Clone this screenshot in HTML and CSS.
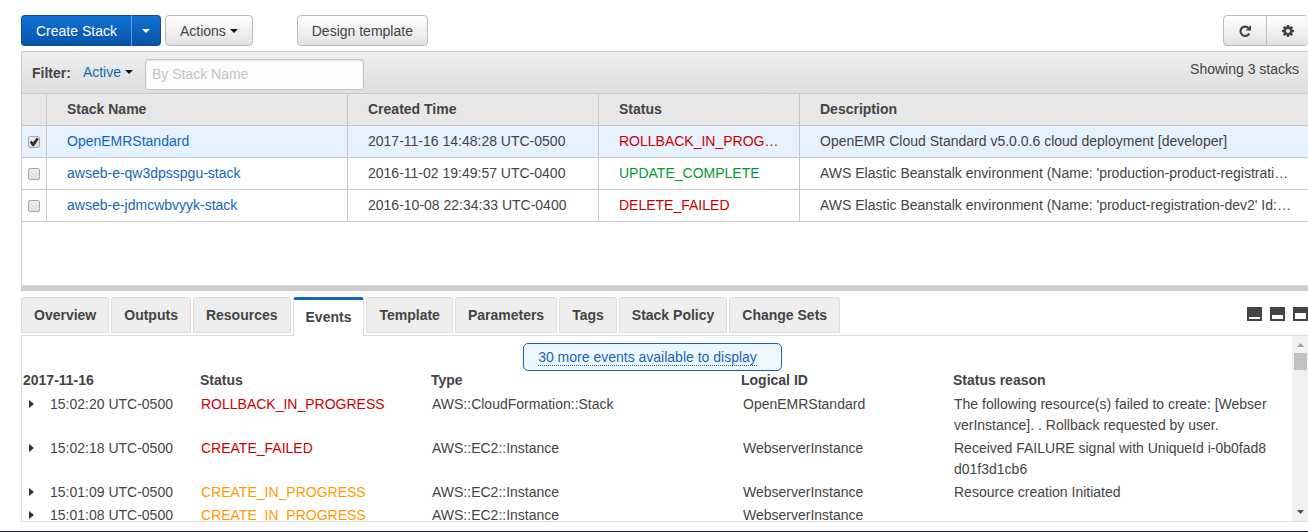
FILE: index.html
```html
<!DOCTYPE html>
<html lang="en">
<head>
<meta charset="utf-8">
<title>CloudFormation Stacks</title>
<link rel="stylesheet" href="styles.css">
</head>
<body>
<div class="page">
  <header class="toolbar">
    <div class="split">
      <button class="btn primary split-main" type="button">Create Stack</button>
      <button class="btn primary split-toggle" type="button" aria-label="More create options"><svg class="caret" viewBox="0 0 8 4" aria-hidden="true"><path d="M0 0h8L4 4z"/></svg></button>
    </div>
    <button class="btn actions" type="button">Actions <svg class="caret dark" viewBox="0 0 8 4" aria-hidden="true"><path d="M0 0h8L4 4z"/></svg></button>
    <button class="btn design" type="button">Design template</button>
    <div class="tools">
      <button class="btn tool" type="button" aria-label="Refresh">
        <svg class="tool-icon" viewBox="0 0 12 12" aria-hidden="true"><path d="M9.500 2.900A4.700 4.700 0 1 0 10.300 8.600" fill="none" stroke="#444" stroke-width="2.200"/><path d="M12 0v5.400H6.600z" fill="#444"/></svg>
      </button>
      <button class="btn tool last" type="button" aria-label="Settings">
        <svg class="tool-icon" viewBox="0 0 12 12" aria-hidden="true">
          <g fill="#444"><path d="M4.800 0h2.400v12H4.800z"/><path d="M0 4.800h12v2.400H0z"/><path d="M4.800 0h2.400v12H4.800z" transform="rotate(45 6 6)"/><path d="M4.800 0h2.400v12H4.800z" transform="rotate(-45 6 6)"/><circle cx="6" cy="6" r="4.700"/></g>
          <circle cx="6" cy="6" r="2" fill="#f1f1f1"/>
        </svg>
      </button>
    </div>
  </header>

  <section class="stacks">
    <div class="filter">
      <span class="filter-label">Filter:</span>
      <button class="filter-menu" type="button">Active <svg class="caret dark" viewBox="0 0 8 4" aria-hidden="true"><path d="M0 0h8L4 4z"/></svg></button>
      <input class="search" type="text" placeholder="By Stack Name" aria-label="By Stack Name">
      <span class="count">Showing 3 stacks</span>
    </div>
    <table class="stack-table">
      <colgroup><col class="c-check"><col class="c-name"><col class="c-created"><col class="c-status"><col></colgroup>
      <thead>
        <tr><th></th><th>Stack Name</th><th>Created Time</th><th>Status</th><th>Description</th></tr>
      </thead>
      <tbody>
        <tr class="selected">
          <td class="pick"><input class="check" type="checkbox" checked aria-label="Select OpenEMRStandard"></td>
          <td><a class="link" href="#">OpenEMRStandard</a></td>
          <td>2017-11-16 14:48:28 UTC-0500</td>
          <td class="bad">ROLLBACK_IN_PROGRESS</td>
          <td>OpenEMR Cloud Standard v5.0.0.6 cloud deployment [developer]</td>
        </tr>
        <tr>
          <td class="pick"><input class="check" type="checkbox" aria-label="Select awseb-e-qw3dpsspgu-stack"></td>
          <td><a class="link" href="#">awseb-e-qw3dpsspgu-stack</a></td>
          <td>2016-11-02 19:49:57 UTC-0400</td>
          <td class="good">UPDATE_COMPLETE</td>
          <td>AWS Elastic Beanstalk environment (Name: 'production-product-registration')</td>
        </tr>
        <tr>
          <td class="pick"><input class="check" type="checkbox" aria-label="Select awseb-e-jdmcwbvyyk-stack"></td>
          <td><a class="link" href="#">awseb-e-jdmcwbvyyk-stack</a></td>
          <td>2016-10-08 22:34:33 UTC-0400</td>
          <td class="bad">DELETE_FAILED</td>
          <td>AWS Elastic Beanstalk environment (Name: 'product-registration-dev2' Id:&nbsp;'e-jdmcwbvyyk')</td>
        </tr>
      </tbody>
    </table>
  </section>
  <div class="splitter"></div>

  <nav class="tabs">
    <button class="tab" type="button">Overview</button>
    <button class="tab" type="button">Outputs</button>
    <button class="tab" type="button">Resources</button>
    <button class="tab active" type="button">Events</button>
    <button class="tab" type="button">Template</button>
    <button class="tab" type="button">Parameters</button>
    <button class="tab" type="button">Tags</button>
    <button class="tab" type="button">Stack Policy</button>
    <button class="tab" type="button">Change Sets</button>
    <div class="layouts">
      <button class="layout" type="button" aria-label="Small details pane"><span class="pane small"></span></button>
      <button class="layout" type="button" aria-label="Medium details pane"><span class="pane medium"></span></button>
      <button class="layout" type="button" aria-label="Large details pane"><span class="pane large"></span></button>
    </div>
  </nav>

  <section class="details">
    <div class="events">
      <div class="notice-row"><div class="notice"><a class="notice-link" href="#">30 more events available to display</a></div></div>
      <table class="event-table">
        <colgroup><col class="e-time"><col class="e-status"><col class="e-type"><col class="e-logical"><col></colgroup>
        <thead>
          <tr><th class="date">2017-11-16</th><th>Status</th><th>Type</th><th>Logical ID</th><th>Status reason</th></tr>
        </thead>
        <tbody>
          <tr>
            <td class="time"><svg class="expand" viewBox="0 0 5 8" aria-hidden="true"><path d="M0 0l5 4-5 4z"/></svg>15:02:20 UTC-0500</td>
            <td class="bad">ROLLBACK_IN_PROGRESS</td><td>AWS::CloudFormation::Stack</td><td class="logical">OpenEMRStandard</td>
            <td class="reason">The following resource(s) failed to create: [WebserverInstance]. . Rollback requested by user.</td>
          </tr>
          <tr>
            <td class="time"><svg class="expand" viewBox="0 0 5 8" aria-hidden="true"><path d="M0 0l5 4-5 4z"/></svg>15:02:18 UTC-0500</td>
            <td class="bad">CREATE_FAILED</td><td>AWS::EC2::Instance</td><td class="logical">WebserverInstance</td>
            <td class="reason">Received FAILURE signal with UniqueId i-0b0fad8d01f3d1cb6</td>
          </tr>
          <tr>
            <td class="time"><svg class="expand" viewBox="0 0 5 8" aria-hidden="true"><path d="M0 0l5 4-5 4z"/></svg>15:01:09 UTC-0500</td>
            <td class="busy">CREATE_IN_PROGRESS</td><td>AWS::EC2::Instance</td><td class="logical">WebserverInstance</td>
            <td class="reason">Resource creation Initiated</td>
          </tr>
          <tr>
            <td class="time"><svg class="expand" viewBox="0 0 5 8" aria-hidden="true"><path d="M0 0l5 4-5 4z"/></svg>15:01:08 UTC-0500</td>
            <td class="busy">CREATE_IN_PROGRESS</td><td>AWS::EC2::Instance</td><td class="logical">WebserverInstance</td>
            <td class="reason"></td>
          </tr>
        </tbody>
      </table>
    </div>
    <div class="scrollbar" aria-hidden="true">
      <svg class="arrow" viewBox="0 0 7 4"><path d="M0 4h7L3.500 0z" fill="#a3a3a3"/></svg>
      <div class="thumb"></div>
      <svg class="arrow down" viewBox="0 0 7 4"><path d="M0 0h7L3.500 4z" fill="#505050"/></svg>
    </div>
  </section>
</div>
</body>
</html>
```

FILE: styles.css
```css
* { box-sizing: border-box; }

body {
  margin: 0;
  background: #fff;
  color: #444;
  font: 14px/20px "Liberation Sans", Arial, sans-serif;
}

button, input { font: inherit; color: inherit; }
button { cursor: pointer; }

.page {
  display: flex;
  flex-direction: column;
  height: 100vh;
  padding: 15px 0 9px 21px;
  border-bottom: 1px solid #232333;
  overflow: hidden;
}

/* Toolbar */
.toolbar { display: flex; height: 36px; flex: none; align-items: flex-start; }

.btn {
  height: 31px;
  padding: 0 14px;
  border: 1px solid #bbb;
  border-radius: 4px;
  background: linear-gradient(#fff, #e2e2e2);
  white-space: nowrap;
}

.primary {
  border-color: #0a4c9b;
  background: linear-gradient(#1372d3, #0553a8);
  color: #fff;
}

.split { display: flex; margin-right: 4px; }
.split-main { border-radius: 4px 0 0 4px; border-right: 0; }
.split-toggle { width: 30px; padding: 0; border-radius: 0 4px 4px 0; border-left-color: #5f9fe0; }

.caret { width: 8px; height: 4px; fill: currentColor; vertical-align: 3px; }
.dark { fill: #111; }

.design { margin-left: 44px; }

.tools { display: flex; margin-left: auto; }
.tool { display: flex; align-items: center; justify-content: center; width: 44px; padding: 0; border-radius: 4px 0 0 4px; }
.last { width: 41px; border-left: 0; border-right: 0; border-radius: 0 4px 4px 0; }
.tool-icon { width: 12px; height: 12px; }

/* Stack list */
.stacks {
  flex: none;
  min-height: 235px;
  border: 1px solid #ccc;
  border-right: 0;
  border-bottom-color: #ddd;
}

.filter {
  display: flex;
  align-items: center;
  height: 42px;
  padding: 0 9px 0 10px;
  border-bottom: 1px solid #c8c8c8;
  background: linear-gradient(#eee, #dedede);
}

.filter-label { font-weight: bold; }
.filter-menu { margin: 0 12px; padding: 0 0 2px; border: 0; background: none; color: #1166bb; }

.search {
  width: 219px;
  height: 31px;
  margin-top: 3px;
  padding: 0 6px;
  border: 1px solid #c4c4c4;
  border-radius: 3px;
  background: #fcfcfc;
  box-shadow: inset 0 1px 2px #ddd;
}
.search::placeholder { color: #c4c4c4; opacity: 1; }

.count { margin: 0 0 7px auto; }

table { width: 100%; table-layout: fixed; border-collapse: separate; border-spacing: 0; }
th { text-align: left; }

.c-check { width: 25px; }
.c-name { width: 301px; }
.c-created { width: 251px; }
.c-status { width: 201px; }

.stack-table th, .stack-table td {
  height: 32px;
  padding: 0 16px 2px 20px;
  border-right: 1px solid #c8c8c8;
  border-bottom: 1px solid #c8c8c8;
  overflow: hidden;
  text-overflow: ellipsis;
  white-space: nowrap;
}
.stack-table th:last-child, .stack-table td:last-child { border-right: 0; }
.stack-table th { background: #e7e7e7; }
.stack-table .pick { padding: 0 6px; text-overflow: clip; }
.selected { background: #e5f1fd; }

.link { color: #1166bb; text-decoration: none; }
.bad { color: #c00; }
.good { color: #093; }
.busy { color: #f90; }

.check {
  display: block;
  width: 12px;
  height: 12px;
  margin: 1px 0 0;
  appearance: none;
  border: 1px solid #aaa;
  border-radius: 2px;
  background: linear-gradient(#eee, #ddd);
}
.check:checked::after {
  content: "";
  display: block;
  width: 10px;
  height: 10px;
  background: #333;
  clip-path: polygon(8% 52%, 26% 38%, 40% 54%, 78% 6%, 98% 22%, 48% 92%, 34% 92%);
}

.splitter { flex: none; height: 5px; background: #ccc; }

/* Tabs */
.tabs { display: flex; flex: none; gap: 2px; height: 44px; padding-top: 6px; }

.tab {
  height: 36px;
  padding: 0 12px;
  border: 1px solid #ddd;
  border-radius: 3px 3px 0 0;
  background: #eee;
  font-weight: bold;
  white-space: nowrap;
}

.active {
  position: relative;
  height: 39px;
  padding-bottom: 2px;
  border-top: 3px solid #1166bb;
  border-bottom: 0;
  background: #fff;
}

.layouts { display: flex; gap: 8px; margin: 10px 0 0 auto; }
.layout {
  display: flex;
  align-items: flex-end;
  width: 15px;
  height: 14px;
  padding: 2px;
  border: 0;
  background: #444;
}
.pane { flex: 1; background: #fff; }
.small { height: 2px; }
.medium { height: 4px; }
.large { height: 6px; }

/* Events */
.details {
  display: flex;
  flex: 1;
  min-height: 0;
  border: 1px solid #ddd;
  border-right: 0;
}
.events { flex: 1; min-width: 0; overflow: hidden; }

.notice-row { display: flex; justify-content: center; padding: 7px 9px 0 0; }
.notice {
  height: 28px;
  padding: 3px 24px 0 14px;
  border: 1px solid #1166bb;
  border-radius: 5px;
  background: #f0f8ff;
}
.notice-link { border-bottom: 1px dotted #1166bb; color: #1166bb; text-decoration: none; }

.e-time { width: 178px; }
.e-status { width: 231px; }
.e-type { width: 310px; }
.e-logical { width: 212px; }

.event-table th { padding: 0 0 4px; line-height: 18px; }
.event-table td { padding: 1px 0 1px 1px; line-height: 21px; vertical-align: top; }
.event-table .date { padding-left: 1px; }
.event-table .time { padding-left: 7px; }
.event-table .logical { padding-left: 2px; }
.event-table .reason { padding-right: 19px; word-break: break-all; }
.expand { width: 5px; height: 8px; margin-right: 16px; fill: #333; vertical-align: 1px; }

.scrollbar {
  display: flex;
  flex-direction: column;
  align-items: center;
  width: 16px;
  padding: 7px 0;
  background: #f1f1f1;
}
.arrow { width: 7px; height: 4px; }
.thumb { width: 13px; height: 17px; margin-top: 6px; background: #c1c1c1; }
.down { margin-top: auto; }
```
